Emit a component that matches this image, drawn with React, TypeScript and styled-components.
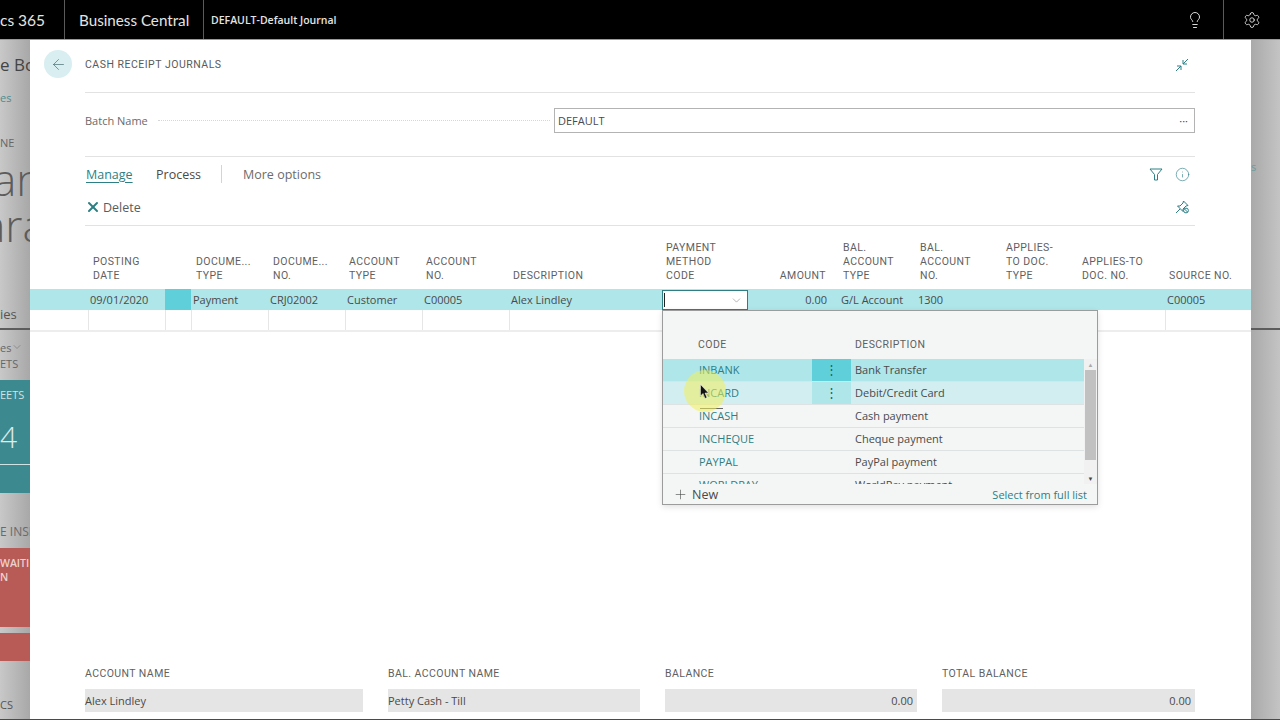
import styled, { createGlobalStyle } from "styled-components"
import { ArrowLeft, ChevronDown, Info, Lightbulb, Plus, Settings, X } from "lucide-react"

const GlobalStyle = createGlobalStyle`
    html, body {
        margin: 0;
        height: 100%;
        overflow: hidden;
        background: #bbb;
    }
    * {
        box-sizing: border-box;
    }
`

const TEAL = "#2c7f85"
const BODY_FONT = `"Open Sans", "Noto Sans", sans-serif`
const HEAD_FONT = `Roboto, "Liberation Sans", sans-serif`
const COLUMNS = "58px 77px 26px 77px 77px 77px 87px 153px 86px 91px 77px 86px 76px 87px 86px"

const Page = styled.div`
    width: 1280px;
    height: 720px;
    display: flex;
    flex-direction: column;
    overflow: hidden;
    font-family: ${BODY_FONT};
    color: #4a4a4a;
`

const TopBar = styled.header`
    height: 40px;
    flex: none;
    display: flex;
    align-items: stretch;
    background: #000;
    color: #e4e4e4;
    border-bottom: 1px solid #9a9a9a;
`

const TopBrand = styled.div<{ $width: number; $indent?: number; $size: number }>`
    width: ${(p) => p.$width}px;
    padding-left: ${(p) => p.$indent ?? 0}px;
    display: flex;
    align-items: center;
    flex: none;
    white-space: nowrap;
    overflow: hidden;
    font-family: Lato, ${BODY_FONT};
    font-size: ${(p) => p.$size}px;
    border-right: 1px solid #5a5a5a;
`

const TopTitle = styled.div`
    padding-left: 7px;
    display: flex;
    align-items: center;
    font-size: 10.5px;
    font-weight: 600;
    white-space: nowrap;
`

const TopSpacer = styled.div`
    flex: 1;
`

const TopIcon = styled.div<{ $width: number; $divided?: boolean }>`
    width: ${(p) => p.$width}px;
    display: flex;
    align-items: center;
    justify-content: center;
    color: #f2f2f2;
    border-right: ${(p) => (p.$divided ? "1px solid #5a5a5a" : "none")};
`

const Stage = styled.div`
    flex: 1;
    min-height: 0;
    display: flex;
    border-bottom: 1px solid #4a4a4a;
`

const Strip = styled.aside<{ $reverse?: boolean }>`
    width: ${(p) => (p.$reverse ? 29 : 30)}px;
    flex: none;
    display: flex;
    flex-direction: column;
    overflow: hidden;
    background: linear-gradient(
        ${(p) => (p.$reverse ? "270deg, #c4c4c4, #a9a9a9" : "90deg, #c8c8c8, #a8a8a8")}
    );
`

const StripText = styled.div<{
    $height: number
    $size?: number
    $color?: string
    $shift?: number
    $thin?: boolean
    $bold?: boolean
    $top?: number
    $bottom?: number
}>`
    height: ${(p) => p.$height}px;
    flex: none;
    display: flex;
    align-items: center;
    margin-left: ${(p) => p.$shift ?? 0}px;
    padding: ${(p) => p.$top ?? 0}px 0 ${(p) => p.$bottom ?? 0}px;
    white-space: nowrap;
    font-size: ${(p) => p.$size ?? 12}px;
    font-weight: ${(p) => (p.$thin ? 300 : p.$bold ? 600 : 400)};
    color: ${(p) => p.$color ?? "#555"};
`

const StripRule = styled.div`
    height: 2px;
    flex: none;
    background: #5c5c5c;
`

const StripBlock = styled.div<{ $height: number; $color: string; $top?: number }>`
    height: ${(p) => p.$height}px;
    flex: none;
    padding-top: ${(p) => p.$top ?? 0}px;
    overflow: hidden;
    background: ${(p) => p.$color};
`

const StripDivider = styled.div`
    height: 1px;
    background: #cfe3e4;
`

const Dialog = styled.main`
    flex: 1;
    min-width: 0;
    display: flex;
    flex-direction: column;
    background: #fff;
`

const Section = styled.section<{ $height: number; $ruled?: boolean; $pad?: number }>`
    height: ${(p) => p.$height}px;
    flex: none;
    margin: 0 56px 0 55px;
    padding-bottom: ${(p) => p.$pad ?? 0}px;
    display: flex;
    align-items: center;
    border-bottom: ${(p) => (p.$ruled ? "1px solid #e2e2e2" : "none")};
`

const BackButton = styled.div`
    width: 28px;
    height: 28px;
    margin-left: -41px;
    margin-right: 13px;
    border-radius: 50%;
    background: #d8eef0;
    display: flex;
    align-items: center;
    justify-content: center;
    color: #4a6f73;
`

const PageTitle = styled.h1`
    margin: 0;
    flex: 1;
    font-family: ${HEAD_FONT};
    font-size: 10.5px;
    font-weight: 400;
    letter-spacing: 0.5px;
    color: #5a5a5a;
`

const ToolIcon = styled.svg`
    display: block;
    width: 16px;
    height: 16px;
    fill: none;
    stroke: ${TEAL};
    stroke-width: 1;
`

const CornerTool = styled.div<{ $drop?: number }>`
    width: 26px;
    margin-top: ${(p) => p.$drop ?? 0}px;
    display: flex;
    justify-content: center;
    color: ${TEAL};
`

const BatchLabel = styled.span`
    font-size: 11px;
    color: #6a6a6a;
    white-space: nowrap;
`

const DotLeader = styled.div`
    flex: 1;
    margin: 0 4px 0 10px;
    border-bottom: 1px dotted #d6d6d6;
`

const BatchInput = styled.div`
    width: 641px;
    height: 25px;
    flex: none;
    padding: 0 6px 0 3px;
    display: flex;
    align-items: center;
    justify-content: space-between;
    font-size: 11px;
    border: 1px solid #b3b3b3;
`

const TabGroup = styled.nav`
    flex: 1;
    margin-left: 1px;
    display: flex;
    align-items: center;
`

const Tab = styled.span<{ $active?: boolean; $muted?: boolean; $width: number }>`
    width: ${(p) => p.$width}px;
    font-size: 12.5px;
    color: ${(p) => (p.$active ? TEAL : p.$muted ? "#6c6c6c" : "#4a4a4a")};
    text-decoration: ${(p) => (p.$active ? "underline" : "none")};
    text-underline-offset: 3px;
`

const TabDivider = styled.div`
    width: 1px;
    height: 18px;
    margin-right: 21px;
    background: #d4d4d4;
`

const DeleteAction = styled.div`
    flex: 1;
    display: flex;
    align-items: center;
    gap: 2px;
    font-size: 12.5px;
    color: #5c5c5c;
    svg {
        color: ${TEAL};
    }
`

const TableHead = styled.div`
    height: 63px;
    flex: none;
    display: grid;
    grid-template-columns: ${COLUMNS};
    align-items: end;
    padding-bottom: 6px;
`

const HeadCell = styled.div<{ $right?: boolean }>`
    padding: 0 ${(p) => (p.$right ? 13 : 0)}px 0 ${(p) => (p.$right ? 0 : 4)}px;
    font-family: ${HEAD_FONT};
    font-size: 10.5px;
    line-height: 14px;
    letter-spacing: 0.42px;
    white-space: pre-line;
    color: #5f5f5f;
    text-align: ${(p) => (p.$right ? "right" : "left")};

    &:nth-child(-n + 5) {
        padding-left: 5px;
    }
`

const TableRow = styled.div<{ $selected?: boolean }>`
    height: ${(p) => (p.$selected ? 21 : 22)}px;
    flex: none;
    display: grid;
    grid-template-columns: ${COLUMNS};
    background: ${(p) => (p.$selected ? "#aee6ea" : "#fff")};
    border-bottom: ${(p) => (p.$selected ? "none" : "2px solid #ededed")};
`

const Cell = styled.div<{ $right?: boolean; $marker?: boolean; $ruled?: boolean; $flush?: boolean }>`
    position: relative;
    padding: ${(p) => (p.$flush ? "1px 0 0" : `0 ${p.$right ? 12 : 0}px 0 ${p.$right ? 0 : 2}px`)};
    display: flex;
    align-items: center;
    justify-content: ${(p) => (p.$right ? "flex-end" : "flex-start")};
    font-size: 11px;
    white-space: nowrap;
    background: ${(p) => (p.$marker ? "#5fd0d9" : "transparent")};
    border-left: ${(p) => (p.$ruled ? "1px solid #e6e6e6" : "none")};
`

const LookupInput = styled.div`
    width: 100%;
    height: 100%;
    padding-right: 4px;
    display: flex;
    align-items: center;
    justify-content: space-between;
    background: #fff;
    border: 1px solid ${TEAL};
    color: #7a7a7a;
`

const Caret = styled.div`
    width: 1px;
    height: 14px;
    margin-left: 1px;
    background: #222;
`

const Lookup = styled.div`
    position: absolute;
    top: 100%;
    left: 0;
    z-index: 2;
    width: 436px;
    height: 195px;
    display: flex;
    flex-direction: column;
    background: #f4f6f6;
    border: 1px solid #9c9c9c;
    box-shadow: 0 2px 6px rgba(0, 0, 0, 0.12);
    white-space: normal;
`

const LookupHead = styled.div`
    height: 48px;
    flex: none;
    padding: 27px 0 0 35px;
    display: grid;
    grid-template-columns: 157px 1fr;
    font-family: ${HEAD_FONT};
    font-size: 10.5px;
    letter-spacing: 0.42px;
    color: #5f5f5f;
`

const LookupMiddle = styled.div`
    height: 125px;
    flex: none;
    display: flex;
`

const LookupList = styled.div`
    flex: 1;
    overflow: hidden;
`

const LookupRow = styled.div<{ $tone?: "active" | "hover" }>`
    height: 23px;
    display: grid;
    grid-template-columns: 149px 39px 1fr;
    align-items: stretch;
    font-size: 11px;
    background: ${(p) => (p.$tone === "active" ? "#aee6ea" : p.$tone === "hover" ? "#d3eef1" : "transparent")};
    border-bottom: 1px solid #dfe2e2;
`

const LookupCode = styled.div`
    padding: 0 0 1px 36px;
    display: flex;
    align-items: center;
    color: ${TEAL};
`

const LookupMenu = styled.div<{ $tone?: "active" | "hover" }>`
    padding-bottom: 3px;
    display: flex;
    align-items: center;
    justify-content: center;
    font-size: 13px;
    color: #2f5f63;
    background: ${(p) => (p.$tone === "active" ? "#5fd0d9" : p.$tone === "hover" ? "#aee6ea" : "transparent")};
`

const LookupText = styled.div`
    padding: 0 0 1px 4px;
    display: flex;
    align-items: center;
`

const ScrollBar = styled.div`
    width: 13px;
    flex: none;
    display: flex;
    flex-direction: column;
    align-items: center;
    background: #f1f1f1;
`

const ScrollArrow = styled.div<{ $down?: boolean }>`
    height: 11px;
    flex: none;
    display: flex;
    align-items: center;
    justify-content: center;
    font-size: 6px;
    color: ${(p) => (p.$down ? "#444" : "#aaa")};
`

const ScrollThumb = styled.div`
    width: 11px;
    height: 90px;
    background: #c1c1c1;
`

const ScrollRest = styled.div`
    flex: 1;
`

const LookupFoot = styled.div`
    flex: 1;
    padding: 0 10px 0 10px;
    display: flex;
    align-items: center;
    justify-content: space-between;
    background: #f4f6f6;
`

const NewButton = styled.div`
    display: flex;
    align-items: center;
    gap: 4px;
    font-size: 12.5px;
`

const FullListLink = styled.span`
    font-size: 11px;
    color: ${TEAL};
`

const Pointer = styled.div`
    position: absolute;
    left: 21px;
    top: 59px;
    width: 42px;
    height: 42px;
    border-radius: 50%;
    background: rgba(240, 240, 90, 0.55);
    pointer-events: none;
`

const PointerArrow = styled.svg`
    position: absolute;
    left: 16px;
    top: 14px;
    width: 9px;
    height: 15px;
`

const Smudge = styled.div`
    position: absolute;
    left: 37px;
    top: 97px;
    width: 23px;
    height: 1px;
    background: #666;
`

const Filler = styled.div`
    flex: 1;
`

const Footer = styled.section`
    flex: none;
    margin: 0 56px 7px 55px;
    display: grid;
    grid-template-columns: 278px 252px 252px 253px;
    column-gap: 25px;
`

const FooterField = styled.div`
    display: flex;
    flex-direction: column;
    gap: 8px;
`

const FooterLabel = styled.label`
    font-family: ${HEAD_FONT};
    font-size: 10.5px;
    line-height: 14px;
    letter-spacing: 0.42px;
    color: #5f5f5f;
`

const FooterValue = styled.div<{ $right?: boolean }>`
    height: 23px;
    padding: 0 4px 0 0;
    display: flex;
    align-items: center;
    justify-content: ${(p) => (p.$right ? "flex-end" : "flex-start")};
    font-size: 11px;
    background: #e5e5e5;
`

const headers = [
    "",
    "POSTING\nDATE",
    "",
    "DOCUME...\nTYPE",
    "DOCUME...\nNO.",
    "ACCOUNT\nTYPE",
    "ACCOUNT\nNO.",
    "DESCRIPTION",
    "PAYMENT\nMETHOD\nCODE",
    "AMOUNT",
    "BAL.\nACCOUNT\nTYPE",
    "BAL.\nACCOUNT\nNO.",
    "APPLIES-\nTO DOC.\nTYPE",
    "APPLIES-TO\nDOC. NO.",
    "SOURCE NO.",
]

const lookupRows: { code: string; text: string; tone?: "active" | "hover" }[] = [
    { code: "INBANK", text: "Bank Transfer", tone: "active" },
    { code: "INCARD", text: "Debit/Credit Card", tone: "hover" },
    { code: "INCASH", text: "Cash payment" },
    { code: "INCHEQUE", text: "Cheque payment" },
    { code: "PAYPAL", text: "PayPal payment" },
    { code: "WORLDPAY", text: "WorldPay payment" },
]

const footerFields = [
    { label: "ACCOUNT NAME", value: "Alex Lindley" },
    { label: "BAL. ACCOUNT NAME", value: "Petty Cash - Till" },
    { label: "BALANCE", value: "0.00", right: true },
    { label: "TOTAL BALANCE", value: "0.00", right: true },
]

function PaymentLookup() {
    return (
        <Lookup>
            <LookupHead>
                <span>CODE</span>
                <span>DESCRIPTION</span>
            </LookupHead>
            <LookupMiddle>
                <LookupList>
                    {lookupRows.map((row) => (
                        <LookupRow key={row.code} $tone={row.tone}>
                            <LookupCode>{row.code}</LookupCode>
                            <LookupMenu $tone={row.tone}>{row.tone ? "⋮" : ""}</LookupMenu>
                            <LookupText>{row.text}</LookupText>
                        </LookupRow>
                    ))}
                </LookupList>
                <ScrollBar>
                    <ScrollArrow>▲</ScrollArrow>
                    <ScrollThumb />
                    <ScrollRest />
                    <ScrollArrow $down>▼</ScrollArrow>
                </ScrollBar>
            </LookupMiddle>
            <LookupFoot>
                <NewButton>
                    <Plus size={15} strokeWidth={1} />
                    New
                </NewButton>
                <FullListLink>Select from full list</FullListLink>
            </LookupFoot>
            <Smudge />
            <Pointer>
                <PointerArrow viewBox="0 0 9 15">
                    <path d="M0.5 0.5 L0.5 12 L3 9.5 L5 14.5 L7 13.5 L5 9 L8.5 9 Z" fill="#111" stroke="#fff" strokeWidth="0.5" />
                </PointerArrow>
            </Pointer>
        </Lookup>
    )
}

export default function App() {
    return (
        <Page>
            <GlobalStyle />
            <TopBar>
                <TopBrand $width={65} $size={15.5}>cs 365</TopBrand>
                <TopBrand $width={139} $indent={14} $size={15.2}>Business Central</TopBrand>
                <TopTitle>DEFAULT-Default Journal</TopTitle>
                <TopSpacer />
                <TopIcon $width={58} $divided>
                    <Lightbulb size={18} strokeWidth={1.2} />
                </TopIcon>
                <TopIcon $width={56}>
                    <Settings size={18} strokeWidth={1.1} />
                </TopIcon>
            </TopBar>
            <Stage>
                <Strip>
                    <StripText $height={48} $size={17} $color="#444">e Bo</StripText>
                    <StripText $height={18} $size={11} $color="#4f8c8e">es</StripText>
                    <StripText $height={50} $top={22} $size={11} $color="#666">NE</StripText>
                    <StripText $height={45} $size={44} $thin $shift={-7} $color="#5c5c5c">an</StripText>
                    <StripText $height={48} $size={44} $thin $shift={-18} $color="#5c5c5c">ara</StripText>
                    <StripText $height={79} $top={51} $size={13}>ies</StripText>
                    <StripRule />
                    <StripText $height={25} $top={9} $size={11} $color="#666">
                        es
                        <ChevronDown size={12} strokeWidth={1} />
                    </StripText>
                    <StripText $height={25} $bottom={9} $size={11} $color="#666">ETS</StripText>
                    <StripBlock $height={113} $color="#3c8a8f">
                        <StripText $height={28} $size={11} $color="#cfe3e4">EETS</StripText>
                        <StripText $height={56} $size={30} $thin $color="#dcebec">4</StripText>
                        <StripDivider />
                    </StripBlock>
                    <StripText $height={55} $top={22} $size={12} $color="#6a6a6a">E INSP</StripText>
                    <StripBlock $height={79} $top={8} $color="#b85a56">
                        <StripText $height={14} $size={10.5} $bold $color="#ecd2d0">WAITI</StripText>
                        <StripText $height={14} $size={10.5} $bold $color="#ecd2d0">N</StripText>
                    </StripBlock>
                    <StripBlock $height={6} $color="transparent" />
                    <StripBlock $height={28} $color="#b85a56" />
                    <StripText $height={58} $top={28} $size={11} $color="#555">CS</StripText>
                </Strip>
                <Dialog>
                    <Section $height={53} $pad={4} $ruled>
                        <BackButton>
                            <ArrowLeft size={17} strokeWidth={1} />
                        </BackButton>
                        <PageTitle>CASH RECEIPT JOURNALS</PageTitle>
                        <CornerTool $drop={2}>
                            <ToolIcon viewBox="0 0 16 16">
                                <path d="M14 2 L9 7 M9 3 V7 H13 M2 14 L7 9 M3 9 H7 V13" />
                            </ToolIcon>
                        </CornerTool>
                    </Section>
                    <Section $height={64} $pad={9} $ruled>
                        <BatchLabel>Batch Name</BatchLabel>
                        <DotLeader />
                        <BatchInput>
                            DEFAULT
                            <span>···</span>
                        </BatchInput>
                    </Section>
                    <Section $height={36} $pad={2}>
                        <TabGroup>
                            <Tab $active $width={70}>Manage</Tab>
                            <Tab $width={65}>Process</Tab>
                            <TabDivider />
                            <Tab $muted $width={120}>More options</Tab>
                        </TabGroup>
                        <CornerTool>
                            <ToolIcon viewBox="0 0 16 16">
                                <path d="M2 3 H14 L9.5 8.5 V14 H6.5 V8.5 Z" />
                            </ToolIcon>
                        </CornerTool>
                        <CornerTool>
                            <Info size={15} strokeWidth={1} />
                        </CornerTool>
                    </Section>
                    <Section $height={33} $pad={4} $ruled>
                        <DeleteAction>
                            <X size={16} strokeWidth={3} />
                            Delete
                        </DeleteAction>
                        <CornerTool>
                            <ToolIcon viewBox="0 0 16 16">
                                <path d="M9.5 2 L14 6.5 L12 7 L9 10 L9 12.5 L3.5 7 L6 7 L9 4 Z M6 10 L2 14" />
                                <circle cx="12" cy="11.5" r="2.4" />
                                <path d="M10.5 10 L13.5 13" />
                            </ToolIcon>
                        </CornerTool>
                    </Section>
                    <TableHead>
                        {headers.map((text, idx) => (
                            <HeadCell key={idx} $right={text === "AMOUNT"}>{text}</HeadCell>
                        ))}
                    </TableHead>
                    <TableRow $selected>
                        <Cell />
                        <Cell>09/01/2020</Cell>
                        <Cell $marker />
                        <Cell>Payment</Cell>
                        <Cell>CRJ02002</Cell>
                        <Cell>Customer</Cell>
                        <Cell>C00005</Cell>
                        <Cell>Alex Lindley</Cell>
                        <Cell $flush>
                            <LookupInput>
                                <Caret />
                                <ChevronDown size={13} strokeWidth={1} />
                            </LookupInput>
                            <PaymentLookup />
                        </Cell>
                        <Cell $right>0.00</Cell>
                        <Cell>G/L Account</Cell>
                        <Cell>1300</Cell>
                        <Cell />
                        <Cell />
                        <Cell>C00005</Cell>
                    </TableRow>
                    <TableRow>
                        {headers.map((_, idx) => (
                            <Cell key={idx} $ruled={idx > 0} />
                        ))}
                    </TableRow>
                    <Filler />
                    <Footer>
                        {footerFields.map((field) => (
                            <FooterField key={field.label}>
                                <FooterLabel>{field.label}</FooterLabel>
                                <FooterValue $right={field.right}>{field.value}</FooterValue>
                            </FooterField>
                        ))}
                    </Footer>
                </Dialog>
                <Strip $reverse>
                    <StripText $height={140} $top={112} $size={11} $color="#6f9a9b">s</StripText>
                    <StripText $height={148} />
                    <StripRule />
                </Strip>
            </Stage>
        </Page>
    )
}
